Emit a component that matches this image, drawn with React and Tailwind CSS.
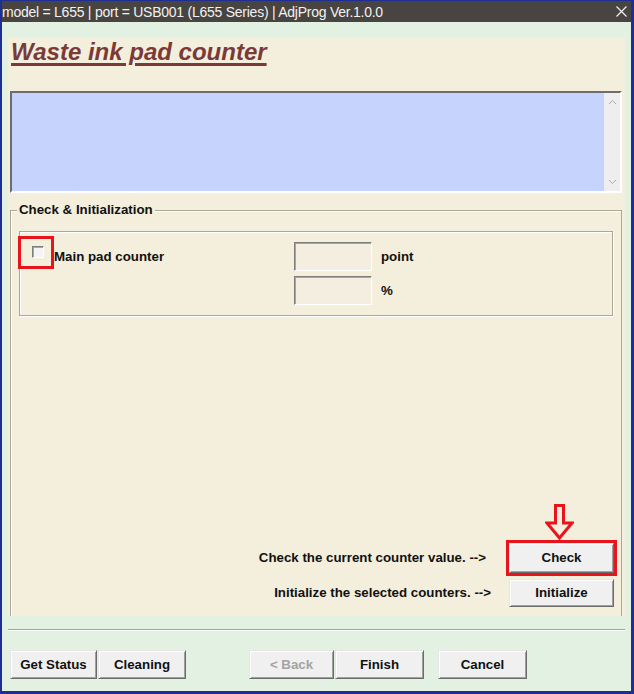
import React from 'react';

// classic raised win32 button
const btn =
  'flex items-center justify-center bg-[#f0f0f0] text-[13.3px] font-bold text-[#111] border border-t-[#e6e6e6] border-l-[#e6e6e6] border-r-[#6b6b6b] border-b-[#6b6b6b] shadow-[inset_1px_1px_0_#ffffff,inset_-1px_-1px_0_#a0a0a0]';

const sunken =
  'border border-t-[#7d7d7d] border-l-[#7d7d7d] border-r-[#ffffff] border-b-[#ffffff] shadow-[inset_1px_1px_0_#a6a6a6]';

const DownArrow = () => (
  <svg width="29" height="36" viewBox="0 0 29 36" className="block">
    <polygon
      points="10.5,1.5 18.5,1.5 18.5,19 27,19 14.5,34 2,19 10.5,19"
      fill="none"
      stroke="#e8141c"
      strokeWidth="3"
      strokeLinejoin="miter"
    />
  </svg>
);

const App = () => {
  return (
    <div className="w-[634px] h-[694px] bg-[#1d2f96] pt-px pl-[2px] pr-[3px] pb-[3px] flex flex-col font-['Liberation_Sans',Arial,sans-serif] overflow-hidden">
      {/* title bar */}
      <div className="h-[21px] shrink-0 bg-[#474441] flex items-center justify-between pr-[4px]">
        <span className="text-[14px] leading-none text-[#f2f2f2] tracking-[-0.25px]">
          model = L655 | port = USB001 (L655 Series) | AdjProg Ver.1.0.0
        </span>
        <svg width="11" height="11" viewBox="0 0 11 11" className="block">
          <path d="M0.5 0.5 L10.5 10.5 M10.5 0.5 L0.5 10.5" stroke="#f2f2f2" strokeWidth="1.2" />
        </svg>
      </div>

      <div className="flex-1 bg-[#e2f1e2] flex flex-col">
        {/* beige panel */}
        <div className="mt-[15px] mx-[6px] h-[579px] bg-[#f4eedd] flex flex-col">
          <h1 className="mt-[2px] ml-[3px] text-[24px] leading-[26px] font-bold italic text-[#7a3b38] underline decoration-[3px] underline-offset-[3px] self-start">
            Waste ink pad counter
          </h1>

          {/* log area */}
          <div className="mt-[26px] ml-[2px] w-[612px] h-[102px] shrink-0 bg-[#c6d3fc] flex border-2 border-t-[#6d6d6d] border-l-[#6d6d6d] border-r-[#ffffff] border-b-[#ffffff]">
            <div className="flex-1" />
            <div className="w-[16px] bg-[#eeeeee] flex flex-col items-center justify-between py-[6px]">
              <svg width="9" height="6" viewBox="0 0 9 6">
                <path d="M1 5 L4.5 1.5 L8 5" fill="none" stroke="#ababab" strokeWidth="1" />
              </svg>
              <svg width="9" height="6" viewBox="0 0 9 6">
                <path d="M1 1 L4.5 4.5 L8 1" fill="none" stroke="#ababab" strokeWidth="1" />
              </svg>
            </div>
          </div>

          {/* group box */}
          <div className="mt-[17px] ml-[2px] w-[612px] flex-1 min-h-0 flex flex-col border border-b-0 border-[#aaa797] shadow-[inset_1px_1px_0_#ffffff]">
            <span className="-mt-[9px] ml-[6px] self-start px-[2px] bg-[#f4eedd] text-[13.3px] leading-[16px] font-bold text-[#111]">
              Check &amp; Initialization
            </span>
            {/* counter box */}
            <div className="relative mt-[13px] ml-[8px] w-[594px] h-[85px] shrink-0 border border-[#aaa797] shadow-[inset_1px_1px_0_#ffffff,1px_1px_0_#ffffff] flex pt-[10px]">
              <div className="w-[274px] pl-[12px] flex items-start">
                <div className={`mt-[4px] w-[12px] h-[12px] bg-[#f4f4f4] ${sunken}`} />
                <span className="ml-[10px] mt-[7px] text-[13.3px] leading-[16px] font-bold text-[#111]">
                  Main pad counter
                </span>
              </div>
              <div className="flex flex-col gap-[5px]">
                <div className="flex items-center">
                  <div className={`w-[78px] h-[29px] bg-[#f3eedf] ${sunken}`} />
                  <span className="ml-[9px] text-[13.3px] font-bold text-[#111]">point</span>
                </div>
                <div className="flex items-center">
                  <div className={`w-[78px] h-[29px] bg-[#f3eedf] ${sunken}`} />
                  <span className="ml-[9px] text-[13.3px] font-bold text-[#111]">%</span>
                </div>
              </div>
              {/* red highlight */}
              <div className="absolute left-[-2px] top-[4px] w-[36px] h-[33px] border-[3px] border-[#e8141c]" />
            </div>

            <div className="flex-1" />

            {/* actions */}
            <div className="flex flex-col items-end pr-[7px] pb-[9px] gap-[6px]">
              <div className="flex items-center">
                <span className="mr-[23px] text-[13.3px] font-bold text-[#111]">
                  Check the current counter value. --&gt;
                </span>
                <div className="relative">
                  <div className={`${btn} w-[105px] h-[30px]`}>Check</div>
                  <div className="absolute -inset-[3px] border-[3px] border-[#e8141c]" />
                  <div className="absolute left-[36px] bottom-[calc(100%+3px)]">
                    <DownArrow />
                  </div>
                </div>
              </div>
              <div className="flex items-center">
                <span className="mr-[18px] text-[13.3px] font-bold text-[#111]">
                  Initialize the selected counters. --&gt;
                </span>
                <div className={`${btn} w-[105px] h-[28px]`}>Initialize</div>
              </div>
            </div>
          </div>
        </div>

        {/* separator */}
        <div className="mt-[13px] mx-[6px] h-[2px] border-t border-t-[#a3a3a3] border-b border-b-[#ffffff]" />

        {/* bottom buttons */}
        <div className="mt-[19px] ml-[8px] flex">
          <div className={`${btn} w-[87px] h-[29px]`}>Get Status</div>
          <div className={`${btn} ml-[1px] w-[88px] h-[29px]`}>Cleaning</div>
          <div className={`${btn} ml-[63px] w-[85px] h-[29px] text-[#a3a3a3]`}>&lt; Back</div>
          <div className={`${btn} ml-[1px] w-[89px] h-[29px] border-[#3f3f3f] border-t-[#3f3f3f] border-l-[#3f3f3f] border-r-[#3f3f3f] border-b-[#3f3f3f]`}>
            Finish
          </div>
          <div className={`${btn} ml-[14px] w-[89px] h-[29px]`}>Cancel</div>
        </div>
      </div>
    </div>
  );
};

export default App;
